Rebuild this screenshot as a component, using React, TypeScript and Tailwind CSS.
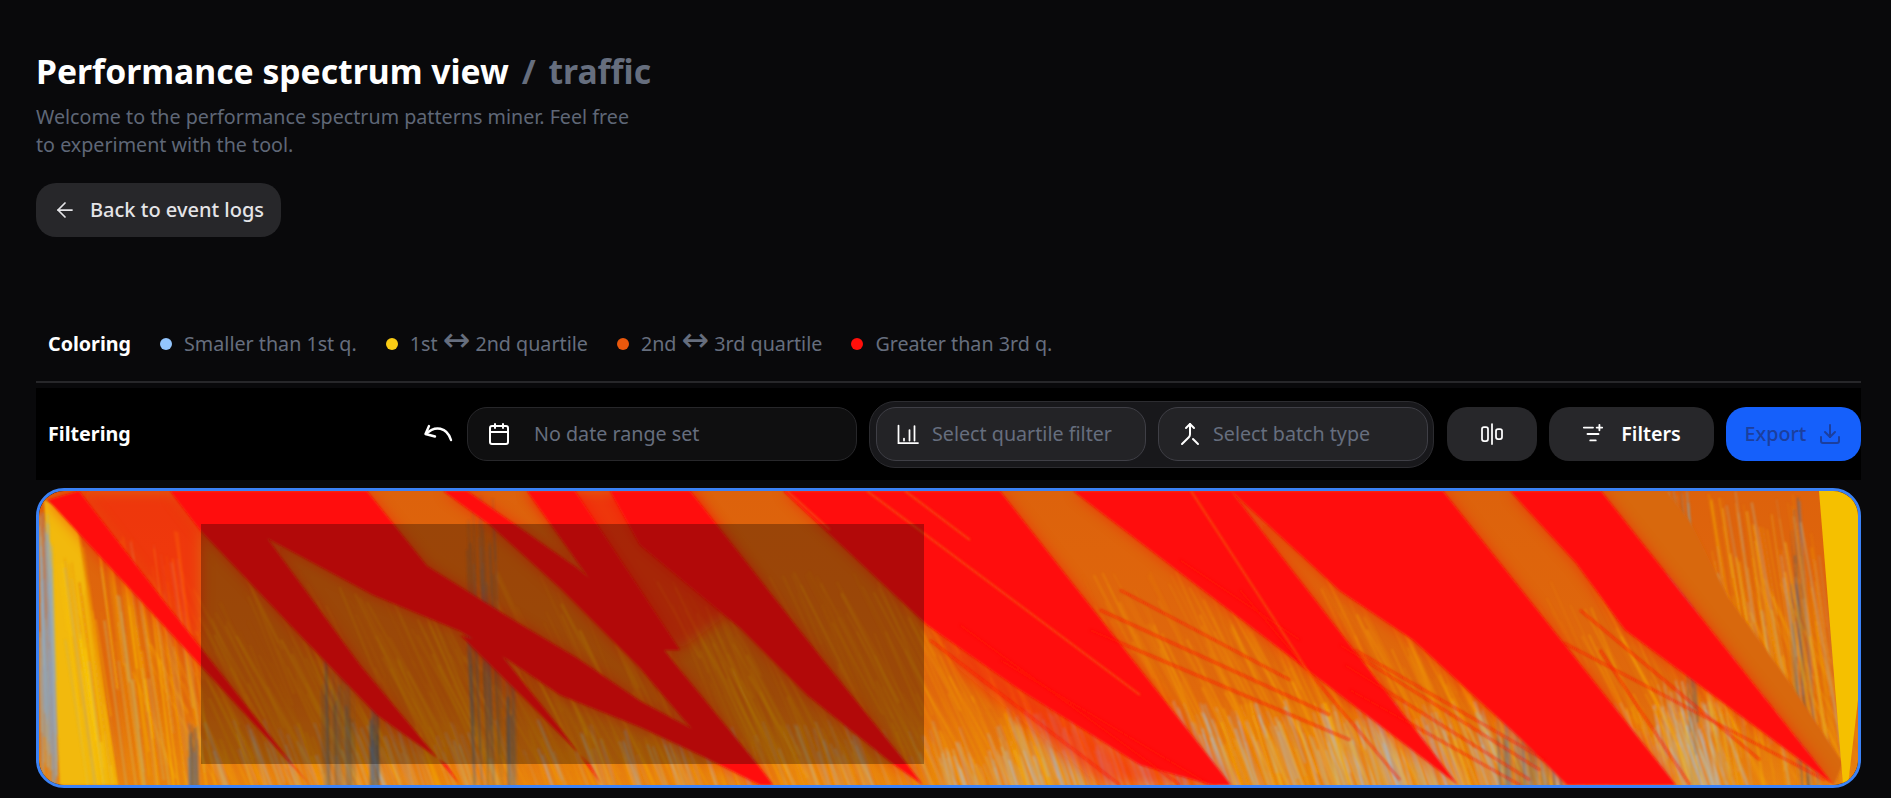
import React from "react";
import {
  AlignHorizontalJustifyCenter,
  ArrowLeft,
  Calendar,
  Download,
  ListFilterPlus,
  Merge,
} from "lucide-react";

// deterministic noise so the spectrum looks the same on every load
let seed = 42;
const rnd = () => {
  seed = (seed * 16807) % 2147483647;
  return seed / 2147483647;
};
const pick = (list: string[]) => list[Math.floor(rnd() * list.length)];

type Streak = { x1: number; y1: number; x2: number; y2: number; c: string; w: number; o: number };

const makeStreaks = (
  count: number,
  xFrom: number,
  xTo: number,
  yFrom: number,
  yTo: number,
  lean: number,
  colors: string[],
  opacity: number,
): Streak[] =>
  Array.from({ length: count }, () => {
    const x = xFrom + rnd() * (xTo - xFrom);
    const y1 = yFrom + rnd() * (yTo - yFrom) * 0.6;
    const y2 = y1 + 60 + rnd() * (yTo - y1);
    return {
      x1: x,
      y1,
      x2: x + (y2 - y1) * lean * (0.8 + rnd() * 0.35),
      y2,
      c: pick(colors),
      w: 0.6 + rnd() * 2,
      o: opacity * (0.4 + rnd() * 0.6),
    };
  });

const warm = ["#f5b50a", "#f7a80c", "#e8820c", "#ffc412"];
const cold = ["#b4bfc8", "#a0bcd8", "#f5b50a", "#f0a010", "#e8820c", "#e8820c"];
const grey = ["#b4bfc8", "#a0bcd8", "#c0c4b8"];
const dark = ["#55606c", "#4d5a68", "#6c7fa0"];

const streaks: Streak[] = [
  ...makeStreaks(70, 940, 1140, 745, 785, 0.3, grey, 0.55),
  ...makeStreaks(90, 1320, 1450, 700, 785, 0.3, grey, 0.55),
  ...makeStreaks(25, 1530, 1565, 745, 785, 0.2, grey, 0.55),
  ...makeStreaks(60, 1650, 1725, 680, 785, 0.2, grey, 0.55),
  ...makeStreaks(800, 130, 1800, 570, 785, 0.5, warm, 0.32),
  ...makeStreaks(500, 200, 1010, 720, 785, 0.36, cold, 0.4),
  ...makeStreaks(900, 1000, 1720, 700, 785, 0.36, cold, 0.5),
  ...makeStreaks(60, 39, 52, 510, 785, 0.03, ["#7f9cc0", "#8fa8c8", "#b0b090"], 0.6),
  ...makeStreaks(110, 58, 180, 530, 785, 0.14, ["#ee9c0a", "#e8820c", "#ffd000", "#c8b060"], 0.6),
  ...makeStreaks(25, 188, 198, 720, 785, 0.02, dark, 0.4),
  ...makeStreaks(40, 320, 355, 650, 785, 0.02, dark, 0.25),
  ...makeStreaks(22, 370, 378, 690, 785, 0.01, dark, 0.4),
  ...makeStreaks(45, 466, 496, 491, 785, 0.04, dark, 0.25),
  ...makeStreaks(16, 505, 515, 660, 785, 0.02, dark, 0.3),
  ...makeStreaks(60, 1495, 1560, 700, 785, 0.05, dark, 0.3),
  ...makeStreaks(14, 1680, 1690, 491, 785, 0.06, dark, 0.45),
  ...makeStreaks(18, 1788, 1800, 491, 785, 0.06, dark, 0.5),
  ...makeStreaks(120, 1690, 1820, 491, 785, 0.16, ["#e8a820", "#f5b50a", "#b8b090", "#e8820c"], 0.6),
  ...makeStreaks(30, 1660, 1692, 491, 590, 0.08, ["#a8a890", "#8f9a98"], 0.7),
];

const redBands = [
  "48,500 79,491 160,596 201,648 293,765 310,785 201,666",
  "170,491 367,491 427,566 510,618 577,658 640,701 757,764 773,785 760,785 700,755 640,727 560,695 510,661 460,631 373,595 267,538 360,665 460,785 447,765 377,715 293,628 200,530",
  "460,635 493,645 560,728 602,785 590,765 527,701",
  "443,491 467,491 520,528 577,568 640,621 757,764 773,785 697,735 640,668 560,588 490,525",
  "527,491 575,491 680,650 640,650",
  "610,491 690,491 827,665 907,764 923,785 893,764 807,695 740,628 640,545",
  "783,491 1000,491 1231,785 1213,785 1140,765 1017,688 927,625",
  "1073,491 1231,491 1458,785",
  "1231,491 1340,591 1413,640 1520,738 1567,785 1676,785 1443,491",
  "1510,491 1576,563 1625,630 1834,785 1601,491",
];

// red tint over the mixed areas next to the solid wedges
const redTints = [
  "79,491 170,491 201,530 201,648",
  "527,491 690,491 760,590 680,650 600,570",
  "927,625 1017,688 1140,765 1213,785 1100,785 960,670",
];

const redLines = [
  "1564,643 1825,780",
  "1100,610 1330,715",
  "1090,630 1350,740",
  "1120,590 1290,680",
  "1340,645 1540,770",
  "1345,665 1530,780",
  "1350,690 1520,785",
  "1355,650 1545,760",
  "1180,560 1300,640",
  "930,640 1120,785",
  "960,625 1180,785",
  "1000,660 1210,785",
  "1240,590 1400,780",
  "1600,650 1690,785",
  "1580,610 1760,760",
];

const orangeLines = [
  "867,491 1140,695",
  "905,491 970,540",
  "1191,491 1320,690",
  "787,491 830,530",
];

const Spectrum = () => (
  <svg viewBox="39 491 1819 294" preserveAspectRatio="none" className="block h-full w-full">
    <defs>
      <linearGradient id="base" x1="0" y1="0" x2="0" y2="1">
        <stop offset="0" stopColor="#dd620c" />
        <stop offset="0.7" stopColor="#e0690c" />
        <stop offset="1" stopColor="#e8820f" />
      </linearGradient>
      <filter id="soft">
        <feGaussianBlur stdDeviation="0.8" />
      </filter>
      <filter id="haze">
        <feGaussianBlur stdDeviation="7" />
      </filter>
    </defs>
    <rect x="39" y="491" width="1819" height="294" fill="url(#base)" />
    <polygon points="44,500 76,515 118,785 60,785" fill="#f2b90a" filter="url(#soft)" />
    <g filter="url(#soft)">
      {streaks.map((s, i) => (
        <line
          key={i}
          x1={s.x1}
          y1={s.y1}
          x2={s.x2}
          y2={s.y2}
          stroke={s.c}
          strokeWidth={s.w}
          opacity={s.o}
        />
      ))}
    </g>
    <g filter="url(#haze)" fill="#ff0f0a" opacity="0.5">
      {redTints.map((points) => (
        <polygon key={points} points={points} />
      ))}
    </g>
    <polygon points="1601,491 1667,491 1691,523 1728,597 1788,680 1843,763 1834,785" fill="#d8670f" filter="url(#soft)" />
    <polygon points="1819,491 1858,491 1858,700 1848,785 1843,785" fill="#f5c000" />
    <g filter="url(#haze)" fill="#ff0f0a" opacity="0.5">
      {redBands.map((points) => (
        <polygon key={points} points={points} />
      ))}
    </g>
    <g filter="url(#soft)" fill="#ff0f0a">
      {redBands.map((points) => (
        <polygon key={points} points={points} />
      ))}
    </g>
    <g filter="url(#soft)" stroke="#ff0f0a" fill="none">
      {redLines.map((points) => (
        <polyline key={points} points={points} strokeWidth="2.5" opacity="0.55" />
      ))}
    </g>
    <g filter="url(#soft)" stroke="#f07c10" fill="none">
      {orangeLines.map((points) => (
        <polyline key={points} points={points} strokeWidth="2" opacity="0.5" />
      ))}
    </g>
  </svg>
);

const UndoIcon = () => (
  <svg width="30" height="22" viewBox="0 0 30 22" fill="none" stroke="#fff" strokeWidth="2.4" strokeLinecap="round" strokeLinejoin="round">
    <path d="M6 3 2.5 11l9.5 2.5" />
    <path d="M3 11C12 2 24 4 28 17" />
  </svg>
);

const BarsIcon = () => (
  <svg width="22" height="22" viewBox="0 0 22 22" fill="none" stroke="#fff" strokeWidth="1.75" strokeLinecap="round">
    <path d="M1.5 2.5V20H21" />
    <path d="M7 15.5v2M12.5 7v10.5M17.5 3v14.5" />
  </svg>
);

const Dot = ({ color, children }: { color: string; children: React.ReactNode }) => (
  <div className="flex items-center gap-3">
    <span className={`h-3 w-3 rounded-full ${color}`} />
    <span className="text-[#666e7e]">{children}</span>
  </div>
);

const Arrows = () => <span className="font-['DejaVu_Sans',sans-serif] text-[33px] leading-[0]">↔</span>;

const App = () => {
  return (
    <main className="h-[798px] overflow-hidden bg-[#09090b] pt-[53px] pr-[30px] pl-9 text-[19.7px] leading-7 font-['Noto_Sans',sans-serif]">
      <h1 className="text-[33.7px] leading-9 font-bold text-white">
        Performance spectrum view{" "}
        <span className="ml-1 text-[#666e7e]">
          / <span className="ml-1">traffic</span>
        </span>
      </h1>
      <p className="mt-[14px] w-[610px] text-[#5f6777]">
        Welcome to the performance spectrum patterns miner. Feel free to experiment with the tool.
      </p>
      <button className="mt-6 flex h-[54px] items-center gap-[13px] rounded-[20px] bg-[#27272a] pr-[17px] pl-[17px] text-[20px] font-medium text-[#e4e4e7]">
        <ArrowLeft size={24} strokeWidth={1.75} />
        Back to event logs
      </button>

      <div className="mt-[93px] flex h-[51px] items-start gap-[29px] px-3">
        <span className="font-bold text-white">Coloring</span>
        <Dot color="bg-[#93c5fd]">Smaller than 1st q.</Dot>
        <Dot color="bg-[#facc15]">1st <Arrows /> 2nd quartile</Dot>
        <Dot color="bg-[#ea580c]">2nd <Arrows /> 3rd quartile</Dot>
        <Dot color="bg-[#ff0f0a]">Greater than 3rd q.</Dot>
      </div>
      <div className="h-0.5 bg-[#27272a]" />

      <div className="mt-[5px] flex h-[92px] items-center justify-between bg-black pl-3">
        <span className="font-bold text-white">Filtering</span>
        <div className="flex items-center">
          <UndoIcon />
          <div className="ml-3.5 flex h-[54px] w-[390px] items-center gap-[23px] rounded-[20px] border border-[#27272a] bg-[#0f0f10] pl-[19px] text-[#666e7e]">
            <Calendar size={24} color="#fff" strokeWidth={2} />
            No date range set
          </div>
          <div className="ml-3 flex h-[67px] w-[565px] items-center gap-3 rounded-[26px] border border-[#2c2c30] bg-[#18181b] pl-1.5">
            <div className="flex h-[54px] w-[270px] items-center gap-[13px] rounded-[20px] border border-[#3f3f46] bg-[#232326] pl-[20px] text-[#666e7e]">
              <BarsIcon />
              Select quartile filter
            </div>
            <div className="flex h-[54px] w-[270px] items-center gap-[11px] rounded-[20px] border border-[#3f3f46] bg-[#232326] pl-[19px] text-[#666e7e]">
              <Merge size={24} color="#fff" strokeWidth={2} />
              Select batch type
            </div>
          </div>
          <button className="ml-[13px] flex h-[54px] w-[90px] items-center justify-center rounded-[20px] bg-[#27272a] text-white">
            <AlignHorizontalJustifyCenter size={24} strokeWidth={1.75} />
          </button>
          <button className="ml-3 flex h-[54px] w-[165px] items-center justify-center gap-[17px] rounded-[20px] bg-[#27272a] font-semibold text-white">
            <ListFilterPlus size={22} strokeWidth={2} />
            Filters
          </button>
          <button className="ml-3 flex h-[54px] w-[135px] items-center justify-center gap-3 rounded-[20px] bg-[#1560fb] font-medium text-[#1c3f9e]">
            Export
            <Download size={24} strokeWidth={2} />
          </button>
        </div>
      </div>

      <div className="relative mt-2 h-[300px] overflow-hidden rounded-[28px] border-[3px] border-[#3b82f6]">
        <Spectrum />
        <div className="absolute top-[33px] left-[162px] h-[240px] w-[723px] bg-black/30" />
      </div>
    </main>
  );
};

export default App;
